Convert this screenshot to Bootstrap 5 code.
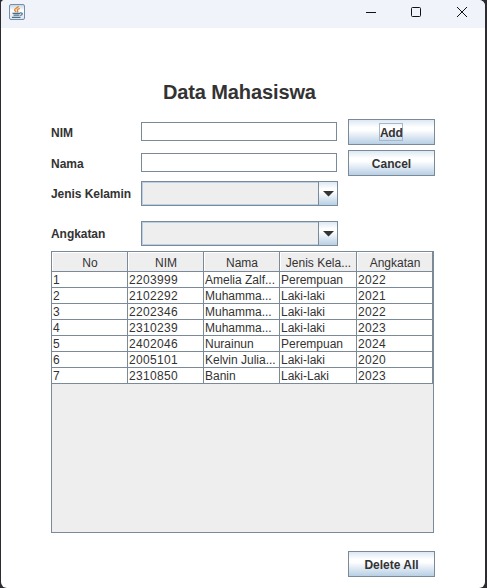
<!DOCTYPE html>
<html lang="id">
<head>
<meta charset="utf-8">
<meta name="viewport" content="width=device-width, initial-scale=1">
<title>Data Mahasiswa</title>
<link href="https://cdn.jsdelivr.net/npm/bootstrap@5.3.0/dist/css/bootstrap.min.css" rel="stylesheet">
<style>
:root{--edge:#7a8a99;--soft:#b8cfe5;--ink:#333}
body{background:#2b2b30;font:12px/16px "Liberation Sans",Arial,sans-serif;color:var(--ink);width:487px;height:588px}
.win{margin:0 2px 0 1px;height:588px;background:#fff;border-radius:4px 6px 6px 6px}
.titlebar{height:28px;background:#f0f3f9;padding-left:8px}
.java-icon{margin-top:-4px}
.win-ctl{width:46px;height:28px;padding-bottom:4px}
.content{padding:0 0 0 50px}
h1{font-size:20px;line-height:24px;font-weight:700;letter-spacing:-.12px;margin:52px 0 0 112px;height:39px}
.form-rows{display:grid;grid-template-columns:90px 197px 97px;grid-template-rows:26px 26px 25px 35px;row-gap:5px}
.form-rows label{font-weight:700;line-height:26px;padding-top:1px;white-space:nowrap}
.form-rows label.combo-label{line-height:23px;padding-top:2px;letter-spacing:-.05px}
.field{height:19px;width:196px;border:1px solid var(--edge);border-radius:0;padding:0 3px;font-size:12px;min-height:0;margin-bottom:1px}
.mbtn{width:87px;height:26px;margin-left:10px;padding:2px 0 0;border:1px solid var(--edge);border-radius:0;font-size:12px;font-weight:700;line-height:16px;color:var(--ink);
background:linear-gradient(#dde8f3 0,#fff 30%,#fff 42%,#b8cfe5 100%)}
.mbtn:hover{border-color:var(--edge);color:var(--ink)}
.focused{display:inline-block;border:1px solid #a3b8cc;height:18px;width:24px;line-height:18px;letter-spacing:-.3px;vertical-align:top;margin:-2px 1px 0 0}
.combo{width:197px;height:25px;border:1px solid var(--edge);background:#eee}
.combo-value{border:1px solid var(--soft);border-right:0}
.combo-arrow{width:19px;border-left:1px solid var(--edge);background:linear-gradient(#dde8f3 0,#fff 30%,#fff 42%,#b8cfe5 100%)}
.grid-pane{width:383px;height:282px;border:1px solid var(--edge);background:#eee;margin-top:5px}
.grid-pane table{table-layout:fixed;width:381px;border-collapse:separate;border-spacing:0;background:#fff}
.grid-pane th,.grid-pane td{border-right:1px solid var(--edge);border-bottom:1px solid var(--edge);white-space:nowrap;overflow:hidden;padding:2px 0 0 1px;line-height:13px;height:16px}
.grid-pane th{height:20px;font-weight:400;text-align:center;background:#eee;line-height:15px;padding-top:4px;box-shadow:inset 1px 1px #fff}
.grid-pane td.num{letter-spacing:.33px}
.delete-row{margin-top:18px;padding-left:287px}
</style>
<script src="https://cdn.jsdelivr.net/npm/bootstrap@5.3.0/dist/js/bootstrap.bundle.min.js"></script>
</head>
<body class="overflow-hidden">
<div class="win overflow-hidden">
  <header class="titlebar d-flex align-items-center">
    <svg class="java-icon" width="16" height="16" viewBox="0 0 16 16" fill="none">
      <defs><linearGradient id="jg" x2="0" y2="1"><stop stop-color="#c3d3e2"/><stop offset=".4" stop-color="#fff"/><stop offset="1" stop-color="#d8e4ee"/></linearGradient></defs>
      <rect x=".5" y=".5" width="15" height="15" rx="1.5" fill="url(#jg)" stroke="#7490a9"/>
      <path d="M9.300 2C9.500 4 5 4.500 5.600 6.200 5.900 7 7 7.300 7 8.200M10.800 4.300C8.500 5 7.800 5.900 8.600 6.900 9 7.500 8.800 8 8.300 8.400" stroke="#e28a3c" stroke-width="1.400"/>
      <path d="M3.500 9.400h7.500M4.500 11.200h6M3 13.400h8.500M11 9c3-.6 3 2 .2 2.500" stroke="#4c7089" stroke-width="1.200"/>
    </svg>
    <div class="d-flex ms-auto">
      <div class="win-ctl d-flex align-items-center justify-content-center"><svg width="12" height="12" stroke="#111" fill="none"><path d="M2 6.500h10"/></svg></div>
      <div class="win-ctl d-flex align-items-center justify-content-center"><svg width="12" height="12" stroke="#111" fill="none"><rect x="1.500" y="1.500" width="9" height="9" rx="1"/></svg></div>
      <div class="win-ctl d-flex align-items-center justify-content-center"><svg width="12" height="12" stroke="#111" fill="none"><path d="M1 1l10 10M11 1L1 11"/></svg></div>
    </div>
  </header>
  <main class="content">
    <h1>Data Mahasiswa</h1>
    <div class="form-rows align-items-center">
      <label for="nim">NIM</label>
      <input id="nim" class="form-control field" type="text">
      <button class="btn mbtn" type="button"><span class="focused">Add</span></button>
      <label for="nama">Nama</label>
      <input id="nama" class="form-control field" type="text">
      <button class="btn mbtn" type="button">Cancel</button>
      <label class="combo-label">Jenis Kelamin</label>
      <div class="combo d-flex"><div class="combo-value flex-grow-1"></div><div class="combo-arrow d-flex align-items-center justify-content-center"><svg width="11" height="6"><path d="M0 0h11L5.500 5.500z" fill="#333"/></svg></div></div>
      <span></span>
      <label class="combo-label align-self-end">Angkatan</label>
      <div class="combo d-flex align-self-end"><div class="combo-value flex-grow-1"></div><div class="combo-arrow d-flex align-items-center justify-content-center"><svg width="11" height="6"><path d="M0 0h11L5.500 5.500z" fill="#333"/></svg></div></div>
      <span></span>
    </div>
    <div class="grid-pane">
      <table>
        <colgroup><col style="width:76px"><col style="width:76px"><col style="width:76px"><col style="width:77px"><col style="width:76px"></colgroup>
        <thead><tr><th>No</th><th>NIM</th><th>Nama</th><th>Jenis Kela...</th><th>Angkatan</th></tr></thead>
        <tbody>
          <tr><td class="num">1</td><td class="num">2203999</td><td>Amelia Zalf...</td><td>Perempuan</td><td class="num">2022</td></tr>
          <tr><td class="num">2</td><td class="num">2102292</td><td>Muhamma...</td><td>Laki-laki</td><td class="num">2021</td></tr>
          <tr><td class="num">3</td><td class="num">2202346</td><td>Muhamma...</td><td>Laki-laki</td><td class="num">2022</td></tr>
          <tr><td class="num">4</td><td class="num">2310239</td><td>Muhamma...</td><td>Laki-laki</td><td class="num">2023</td></tr>
          <tr><td class="num">5</td><td class="num">2402046</td><td>Nurainun</td><td>Perempuan</td><td class="num">2024</td></tr>
          <tr><td class="num">6</td><td class="num">2005101</td><td>Kelvin Julia...</td><td>Laki-laki</td><td class="num">2020</td></tr>
          <tr><td class="num">7</td><td class="num">2310850</td><td>Banin</td><td>Laki-Laki</td><td class="num">2023</td></tr>
        </tbody>
      </table>
    </div>
    <div class="delete-row"><button class="btn mbtn" type="button">Delete All</button></div>
  </main>
</div>
</body>
</html>
